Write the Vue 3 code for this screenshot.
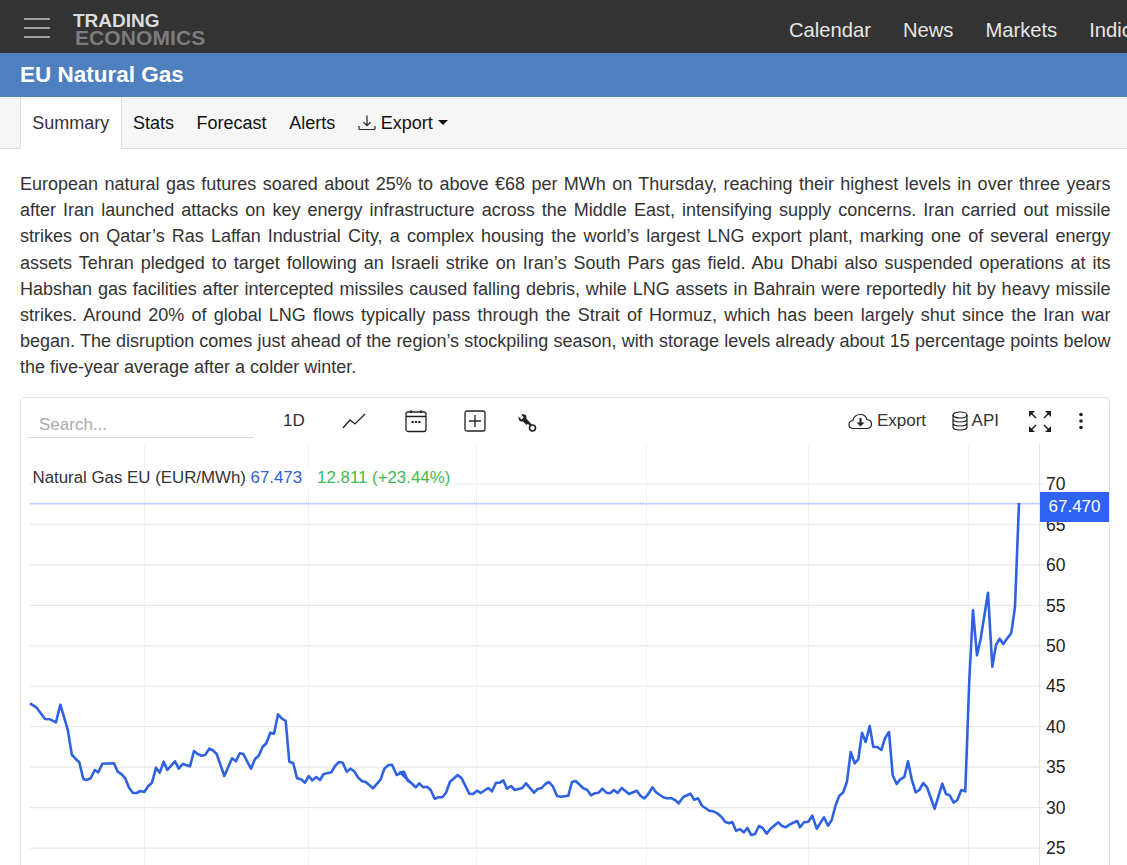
<script setup>
const seg4 = [[30,40],[50,53],[75,87],[90,88],[108,97],[121,44],[143,118],[155,193],[168,208],[178,217],[190,267],[200,270],[212,265],[224,240],[235,247],[247,221],[282,220],[293,245],[305,253],[316,265],[327,293],[339,309],[350,309],[361,303],[373,306],[385,288],[396,278],[408,233],[419,248],[431,215],[442,240],[465,214],[476,236],[488,222],[510,229],[522,183],[533,192],[545,197],[556,194],[568,176],[579,181],[590,192],[613,258],[636,205],[648,214],[659,190],[670,192],[693,236],[705,207],[716,197],[728,170],[739,160],[751,128],[762,131],[774,73],[785,85],[797,93],[808,215],[820,220],[831,265],[843,268],[855,278],[866,258],[877,271],[889,261],[900,270],[911,252],[934,247],[945,228],[957,216],[968,218],[980,245],[991,236],[1002,243],[1014,262],[1025,273],[1037,276],[1059,295],[1082,268],[1093,236],[1105,226],[1116,224],[1130,255],[1150,245],[1163,272],[1175,280],[1187,292]]
const seg5 = [[0,97],[12,96],[24,123],[35,130],[47,142],[58,130],[70,142],[81,140],[92,150],[104,176],[116,172],[127,172],[138,158],[150,125],[162,115],[173,105],[185,115],[208,161],[219,162],[231,152],[242,159],[265,144],[276,154],[288,128],[299,128],[310,121],[321,146],[333,138],[344,150],[367,144],[378,130],[402,158],[413,147],[425,144],[436,132],[447,126],[459,140],[471,168],[482,170],[505,167],[516,126],[527,123],[550,145],[562,150],[573,166],[584,160],[596,158],[607,146],[619,158],[630,160],[642,150],[653,159],[665,144],[687,162],[710,152],[722,168],[733,175],[745,162],[757,142],[768,157],[790,172],[800,175],[815,175],[825,180],[836,190],[850,171],[871,161],[883,179],[894,175],[906,197],[928,212],[940,214],[952,220],[965,232],[975,245],[987,250],[997,246],[1008,272],[1020,268],[1031,277],[1042,264],[1054,285],[1065,282],[1077,258],[1088,264],[1100,281],[1111,267],[1135,247],[1146,258],[1158,262],[1170,253],[1192,243]]
const seg6 = [[0,712],[12,697],[25,695],[37,677],[50,716],[72,682],[84,707],[95,690],[107,645],[118,617],[129,608],[141,575],[152,486],[164,520],[175,508],[186,428],[197,456],[209,408],[220,471],[232,471],[244,480],[255,445],[267,426],[278,556],[290,582],[301,568],[313,561],[324,514],[335,568],[347,607],[358,600],[370,579],[381,592],[404,656],[427,581],[438,612],[449,616],[461,638],[472,630],[484,600],[496,604],[508,270],[519,61],[531,196],[542,146],[564,8],[577,230],[588,165],[599,146],[610,162],[622,145],[634,129],[645,50]]
const map = (seg, ox, oy) => seg.map(([x, y]) => `${(ox + x / 3).toFixed(1)},${(oy + y / 3).toFixed(1)}`)
const chartLine = [...map(seg4, 20, 690), ...map(seg5, 400, 740), ...map(seg6, 800, 590), '1019,503'].join(' ')
const hLines = [70, 65, 60, 55, 50, 45, 40, 35, 30, 25].map((v, i) => ({ v, y: 484 + i * 40.45 }))
const vLines = [144, 308, 476, 646, 808, 968]
const tabs = ['Stats', 'Forecast', 'Alerts']
const nav = ['Calendar', 'News', 'Markets', 'Indicators']
</script>

<template>
  <div class="page">
    <header class="top">
      <div class="burger"><i></i><i></i><i></i></div>
      <div class="logo"><span class="l1">TRADING</span><span class="l2">ECONOMICS</span></div>
      <nav class="nav"><a v-for="n in nav" :key="n">{{ n }}</a></nav>
    </header>
    <div class="title">EU Natural Gas</div>
    <div class="tabs">
      <a class="tab active">Summary</a>
      <a v-for="t in tabs" :key="t" class="tab">{{ t }}</a>
      <a class="tab export">
        <svg width="18" height="18" viewBox="0 0 18 18" fill="none" stroke="#222" stroke-width="1.2"><path d="M9 1.5v10M5.5 8.2 9 11.7l3.500-3.500M1 12v2.500q0 1 1 1h14q1 0 1-1V12"/></svg>
        Export<span class="caret"></span>
      </a>
    </div>
    <p class="para">European natural gas futures soared about 25% to above €68 per MWh on Thursday, reaching their highest levels in over three years after Iran launched attacks on key energy infrastructure across the Middle East, intensifying supply concerns. Iran carried out missile strikes on Qatar’s Ras Laffan Industrial City, a complex housing the world’s largest LNG export plant, marking one of several energy assets Tehran pledged to target following an Israeli strike on Iran’s South Pars gas field. Abu Dhabi also suspended operations at its Habshan gas facilities after intercepted missiles caused falling debris, while LNG assets in Bahrain were reportedly hit by heavy missile strikes. Around 20% of global LNG flows typically pass through the Strait of Hormuz, which has been largely shut since the Iran war began. The disruption comes just ahead of the region’s stockpiling season, with storage levels already about 15 percentage points below the five-year average after a colder winter.</p>
    <section class="card">
      <div class="toolbar">
        <div class="search">Search...</div>
        <span class="one-d">1D</span>
        <svg class="ic i-line" width="24" height="16" viewBox="0 0 24 16" fill="none" stroke="#222" stroke-width="1.300"><path d="M1 15 8 7l5 4 10-10"/></svg>
        <svg class="ic i-cal" width="22" height="24" viewBox="0 0 22 24" fill="none" stroke="#222" stroke-width="1.300"><rect x="1" y="3" width="20" height="19.500" rx="2"/><path d="M1 7.500h20M6 1v3M16 1v3"/><path d="M6.500 13h2.200M9.900 13h2.200M13.300 13h2.200" stroke-width="2"/></svg>
        <svg class="ic i-plus" width="22" height="22" viewBox="0 0 22 22" fill="none" stroke="#222" stroke-width="1.300"><rect x="1" y="1" width="20" height="20" rx="2"/><path d="M11 5v12M5 11h12"/></svg>
        <svg class="ic i-wrench" width="20" height="20" viewBox="0 0 20 20" fill="none" stroke="#222"><path d="M1.500 3.500 4.500 6.500 6.800 4.500 4 1.500q3.500-1 5 1 1 1.800.2 3.500l3.300 3.500-3 2.500L6 8.500q-3 .5-4-1.500-.8-1.800-.5-3.500z" fill="#222" stroke="none"/><path d="m9 7 5 5.500" stroke-width="2.600"/><circle cx="15.500" cy="15" r="3" stroke-width="1.600"/></svg>
        <div class="spacer"></div>
        <span class="act export-act">
          <svg width="25" height="18" viewBox="0 0 25 18" fill="none" stroke="#222" stroke-width="1.200"><path d="M6 16.500q-5 0-5-4 0-3.500 4-4 1-6 7.500-6 5 0 6.500 5 4.500.5 4.500 4.500 0 4.500-5 4.500z"/><path d="M12.500 6v6" stroke-width="2"/><path d="m8.500 10.500h8l-4 4z" fill="#222" stroke="none"/></svg>
          Export
        </span>
        <span class="act api-act">
          <svg width="16" height="20" viewBox="0 0 16 20" fill="none" stroke="#222" stroke-width="1.200"><ellipse cx="8" cy="4" rx="7" ry="3"/><path d="M1 4v12c0 1.700 3 3 7 3s7-1.300 7-3V4M1 8c0 1.700 3 3 7 3s7-1.300 7-3M1 12c0 1.700 3 3 7 3s7-1.300 7-3"/></svg>
          API
        </span>
        <svg class="ic i-full" width="22" height="21" viewBox="0 0 22 21" fill="#222" stroke="#222"><path d="M0 0h6L0 6zM22 0h-6l6 6zM0 21h6l-6-6zM22 21h-6l6-6z" stroke="none"/><path d="m2 2 5 5M20 2l-5 5M2 19l5-5M20 19l-5-5" stroke-width="1.500"/></svg>
        <svg class="ic i-more" width="6" height="18" viewBox="0 0 6 18" fill="#222"><circle cx="3" cy="2.500" r="1.800"/><circle cx="3" cy="9" r="1.800"/><circle cx="3" cy="15.500" r="1.800"/></svg>
      </div>
      <div class="plot">
        <svg class="plot-svg" width="1088" height="421" viewBox="21 444 1088 421">
          <line v-for="x in vLines" :key="x" :x1="x + .5" :x2="x + .5" y1="444" y2="865" stroke="#f1f3f5" />
          <line x1="1039.500" x2="1039.500" y1="444" y2="865" stroke="#e6e6e6" />
          <line v-for="h in hLines" :key="h.v" x1="30" :x2="1044" :y1="h.y" :y2="h.y" stroke="#e9e9e9" stroke-width="1.200" />
          <line x1="30" x2="1040" y1="503.600" y2="503.600" stroke="#a9bff5" stroke-width="1.800" stroke-dasharray="1.500 .5" />
          <polyline :points="chartLine" fill="none" stroke="#2f62e0" stroke-width="2.600" stroke-linejoin="round" />
        </svg>
        <div class="legend">Natural Gas EU (EUR/MWh) <span class="blue">67.473</span><span class="green">12.811 (+23.44%)</span></div>
        <span v-for="h in hLines" :key="'l' + h.v" class="ylabel" :style="{ top: h.y - 444 - 9.8 + 'px' }">{{ h.v }}</span>
        <span class="price">67.470</span>
      </div>
    </section>
  </div>
</template>

<style>
html, body { margin: 0; overflow: hidden; }
</style>

<style scoped>
.page { width: 1127px; height: 865px; overflow: hidden; font-family: "Liberation Sans", Arial, sans-serif; color: #222; background: #fff; }
.top { height: 53px; background: #333; display: flex; align-items: center; position: relative; padding-left: 24px; box-sizing: border-box; }
.burger { width: 26px; display: flex; flex-direction: column; gap: 7px; margin-top: 2px; }
.burger i { display: block; height: 2px; background: #a0a0a0; }
.logo { margin-left: 23px; display: flex; flex-direction: column; font-weight: 700; line-height: 17px; margin-top: 5px; }
.l1 { color: #dcdcdc; font-size: 19px; letter-spacing: 0; }
.l2 { color: #7c7c7c; font-size: 21px; letter-spacing: .1px; margin-left: 2px; }
.nav { margin-left: auto; display: flex; gap: 32px; white-space: nowrap; width: 338px; overflow: hidden; font-size: 20.200px; color: #e6e6e6; flex: none; margin-top: 8px; }
.title { height: 44px; background: #4e7fbf; color: #fff; font-weight: 700; font-size: 22.500px; line-height: 44px; padding-left: 20px; }
.tabs { height: 52px; box-sizing: border-box; background: #f6f6f6; border-bottom: 1px solid #ddd; display: flex; padding-left: 20px; font-size: 18px; color: #111; }
.tab { padding: 0 11.300px; line-height: 52px; height: 51px; }
.tab.active { background: #fff; color: #333; height: 52px; border-left: 1px solid #ddd; border-right: 1px solid #ddd; }
.export { display: flex; align-items: center; gap: 5px; }
.caret { width: 0; height: 0; border: 5px solid transparent; border-top-color: #111; border-bottom: 0; margin-left: 0; }
.para { margin: 22px 16.500px 0 20px; font-size: 18px; line-height: 26.200px; text-align: justify; color: #333; height: 226px; }
.card { margin: 0 17px 0 20px; height: 480px; border: 1px solid #e4e4e4; border-radius: 4px; box-sizing: border-box; }
.toolbar { height: 46px; display: flex; align-items: center; font-size: 17px; color: #333; position: relative; }
.search { width: 215px; margin-left: 6px; padding-left: 12px; color: #aaa; height: 28px; line-height: 32px; border-bottom: 1px solid #ddd; margin-top: 5px; flex: none; }
.one-d { margin-left: 29px; }
.i-line { margin-left: 37px; }
.i-cal { margin-left: 39px; }
.i-plus { margin-left: 37px; }
.i-wrench { margin-left: 31px; margin-top: 3px; }
.spacer { flex: 1; }
.act { display: flex; align-items: center; gap: 4px; }
.api-act { margin-left: 25.500px; }
.i-full { margin-left: 30px; }
.i-more { margin-left: 27px; margin-right: 25px; }
.plot { position: relative; height: 432px; }
.plot-svg { display: block; }
.legend { position: absolute; left: 11.500px; top: 24px; font-size: 16.850px; color: #333; white-space: nowrap; background: #fff; padding-right: 5px; }
.blue { color: #2f62e0; }
.green { color: #3dbb4e; margin-left: 15px; }
.ylabel { position: absolute; left: 1025px; font-size: 17.500px; color: #222; line-height: 20px; }
.price { position: absolute; left: 1019px; top: 48px; width: 69px; height: 30px; background: #2f62f0; color: #fff; font-size: 17px; line-height: 30px; text-align: center; }
</style>
